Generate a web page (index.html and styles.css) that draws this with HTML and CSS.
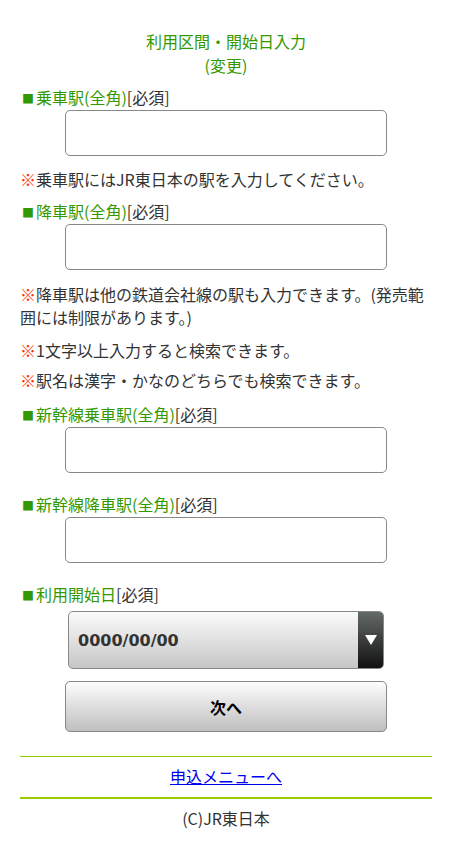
FILE: index.html
```html
<!DOCTYPE html>
<html lang="ja">
<head>
<meta charset="utf-8">
<title>利用区間・開始日入力</title>
<link rel="stylesheet" href="styles.css">
</head>
<body>
<div class="page">
  <h1 class="title">利用区間・開始日入力<br>(変更)</h1>

  <div class="label lbl1"><span class="g"><span class="sq">■</span>乗車駅(全角)</span>[必須]</div>
  <input class="field" type="text">
  <p class="note n1"><span class="mark">※</span>乗車駅にはJR東日本の駅を入力してください。</p>

  <div class="label lbl2"><span class="g"><span class="sq">■</span>降車駅(全角)</span>[必須]</div>
  <input class="field" type="text">
  <p class="note n2"><span class="mark">※</span>降車駅は他の鉄道会社線の駅も入力できます。(発売範囲には制限があります。)</p>
  <p class="note n3"><span class="mark">※</span>1文字以上入力すると検索できます。</p>
  <p class="note n4"><span class="mark">※</span>駅名は漢字・かなのどちらでも検索できます。</p>

  <div class="label lbl3"><span class="g"><span class="sq">■</span>新幹線乗車駅(全角)</span>[必須]</div>
  <input class="field" type="text">

  <div class="label lbl4"><span class="g"><span class="sq">■</span>新幹線降車駅(全角)</span>[必須]</div>
  <input class="field" type="text">

  <div class="label lbl5"><span class="g"><span class="sq">■</span>利用開始日</span>[必須]</div>
  <div class="select">
    <span class="select-value">0000/00/00</span>
    <span class="select-arrow"><svg width="12" height="10" viewBox="0 0 12 10"><path d="M0 0H12L6 10Z" fill="#fff"/></svg></span>
  </div>
  <button class="next" type="button">次へ</button>

  <div class="menu"><a href="#">申込メニューへ</a></div>
  <div class="footer">(C)JR東日本</div>
</div>
</body>
</html>
```

FILE: styles.css
```css
html, body {
  margin: 0;
  padding: 0;
  background: #fff;
}
body {
  font-family: "Noto Sans CJK JP", "Noto Sans", sans-serif;
  font-size: 16px;
  color: #333;
}
.page {
  padding: 29px 20px 20px;
}
.title {
  margin: 0;
  font-size: 16px;
  font-weight: normal;
  line-height: 24px;
  text-align: center;
  color: #339900;
}
.label {
  height: 22px;
  line-height: 22px;
  color: #333;
}
.label .g {
  color: #339900;
}
.label .sq {
  display: inline-block;
  width: 16px;
  font-size: 12px;
  line-height: 12px;
  text-align: center;
}
.lbl1 { margin-top: 9px; }
.lbl2 { margin-top: 10px; }
.lbl3 { margin-top: 12px; }
.lbl4 { margin-top: 20px; }
.lbl5 { margin-top: 20px; }
.field {
  display: block;
  box-sizing: border-box;
  width: 322px;
  height: 46px;
  margin: 2px auto 0;
  border: 1px solid #888;
  border-radius: 5px;
  background: #fff;
  font: inherit;
}
.note {
  margin: 0;
  line-height: 22px;
}
.note .mark {
  color: #ff3300;
}
.n1 { margin-top: 12px; }
.n2 { margin-top: 13px; line-height: 22.5px; }
.n3 { margin-top: 11px; }
.n4 { margin-top: 8px; }
.select {
  box-sizing: border-box;
  width: 316px;
  height: 58px;
  margin: 6px auto 0;
  display: flex;
  align-items: stretch;
  border: 1px solid #888;
  border-radius: 5px;
  overflow: hidden;
  background: linear-gradient(#fbfbfb, #c6c6c6);
}
.select-value {
  flex: 1;
  display: flex;
  align-items: center;
  padding-left: 9px;
  font-family: "DejaVu Sans", sans-serif;
  font-weight: bold;
  font-size: 16px;
  color: #333;
}
.select-arrow {
  width: 25px;
  display: flex;
  align-items: center;
  justify-content: center;
  background: linear-gradient(#646a67, #101010);
}
.next {
  display: block;
  box-sizing: border-box;
  width: 322px;
  height: 51px;
  margin: 12px auto 0;
  border: 1px solid #888;
  border-radius: 5px;
  background: linear-gradient(#fdfdfd, #bfbfbf);
  font-family: "Noto Sans CJK JP", sans-serif;
  font-size: 16px;
  font-weight: bold;
  color: #000;
}
.menu {
  margin-top: 24px;
  border-top: 1px solid #99cc00;
  border-bottom: 2px solid #99cc00;
  padding: 8px 0 10px;
  line-height: 22px;
  text-align: center;
}
.menu a {
  color: #0000ee;
}
.footer {
  margin-top: 8px;
  line-height: 22px;
  text-align: center;
  color: #333;
}
```
